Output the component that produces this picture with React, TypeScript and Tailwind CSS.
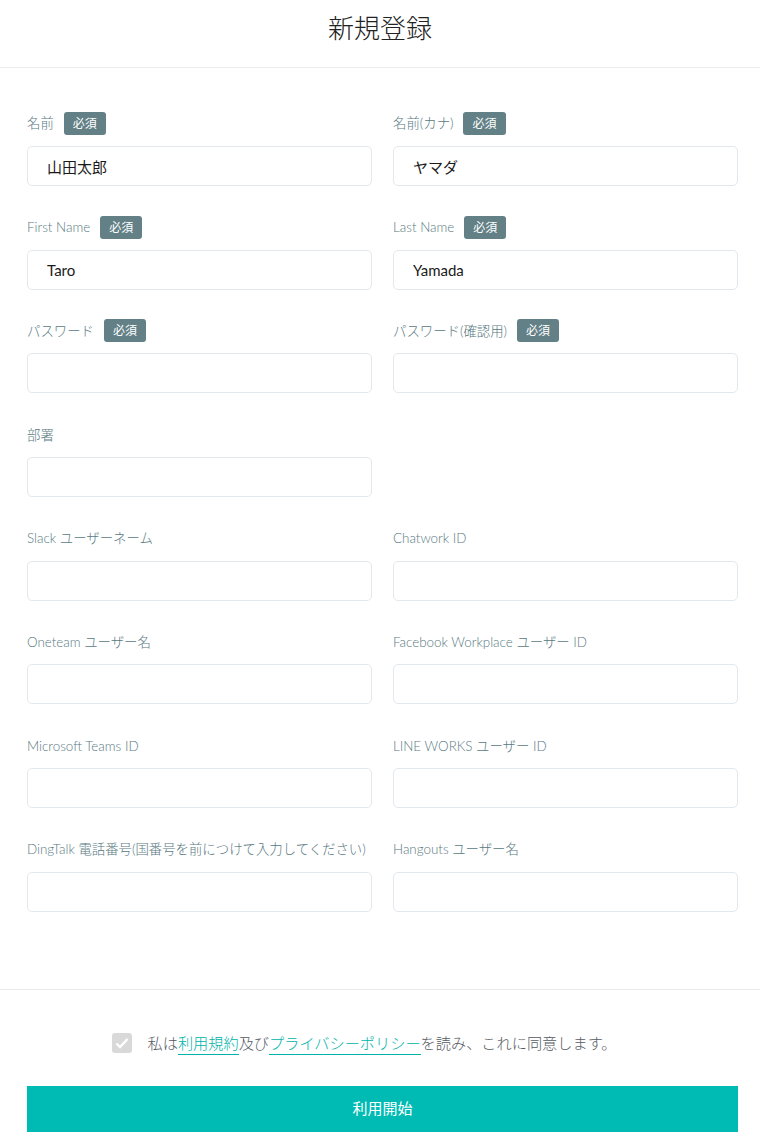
import React from 'react'

const font = { fontFamily: 'Lato, "Noto Sans CJK JP", sans-serif' }

type Field = { label: string, required?: boolean, value?: string, type?: string }

const rows: (Field | null)[][] = [
    [{ label: '名前', required: true, value: '山田太郎' }, { label: '名前(カナ)', required: true, value: 'ヤマダ' }],
    [{ label: 'First Name', required: true, value: 'Taro' }, { label: 'Last Name', required: true, value: 'Yamada' }],
    [{ label: 'パスワード', required: true, type: 'password' }, { label: 'パスワード(確認用)', required: true, type: 'password' }],
    [{ label: '部署' }, null],
    [{ label: 'Slack ユーザーネーム' }, { label: 'Chatwork ID' }],
    [{ label: 'Oneteam ユーザー名' }, { label: 'Facebook Workplace ユーザー ID' }],
    [{ label: 'Microsoft Teams ID' }, { label: 'LINE WORKS ユーザー ID' }],
    [{ label: 'DingTalk 電話番号(国番号を前につけて入力してください)' }, { label: 'Hangouts ユーザー名' }],
]

function FormField({ field }: { field: Field }) {
    return (
        <div className="flex flex-col">
            <div className="flex items-center h-[23px] mb-[11px]">
                <span className="text-[13.4px] font-light text-[#58797f] whitespace-nowrap">{field.label}</span>
                {field.required && (
                    <span className="ml-[10px] h-[23px] px-[9px] rounded-[3px] bg-[#638086] text-white text-[12px] leading-[23px]">
                        必須
                    </span>
                )}
            </div>
            <input
                type={field.type ?? 'text'}
                defaultValue={field.value}
                className="h-[40px] w-full rounded-[5px] border border-[#e3e8ee] bg-white px-[19px] text-[15px] text-[#1a1a1a] outline-none"
                style={font}
            />
        </div>
    )
}

export default function App() {
    return (
        <div className="min-h-[1144px] bg-white" style={font}>
            <header className="h-[68px] border-b border-[#ececec] flex items-center justify-center">
                <h1 className="text-[26px] font-light text-[#222] -mt-[10px]">新規登録</h1>
            </header>

            <form className="pt-[44px] pl-[27px] pr-[22px] flex flex-col gap-[29.7px]">
                {rows.map((row, i) => (
                    <div key={i} className="grid grid-cols-2 gap-x-[21px]">
                        {row.map((f, j) => f ? <FormField key={j} field={f} /> : <div key={j} />)}
                    </div>
                ))}
            </form>

            <div className="mt-[77px] border-t border-[#ececec]" />

            <div className="pt-[42px] flex items-center justify-center pr-[32px]">
                <span className="w-[20px] h-[20px] rounded-[3px] bg-[#d9d9d9] flex items-center justify-center">
                    <svg width="16" height="16" viewBox="0 0 16 16" fill="none">
                        <path d="M2.5 8.5l3.5 3.5 7.5-8" stroke="white" strokeWidth="2.4" />
                    </svg>
                </span>
                <p className="ml-[16px] text-[15.2px] font-light text-[#555a62]">
                    私は<a className="text-[#00b3aa] border-b border-[#00b3aa] pb-[2px]">利用規約</a>及び<a className="text-[#00b3aa] border-b border-[#00b3aa] pb-[2px]">プライバシーポリシー</a>を読み、これに同意します。
                </p>
            </div>

            <div className="pt-[31px] pl-[27px] pr-[22px]">
                <button className="w-full h-[46px] bg-[#00bbb4] text-white text-[15px]">
                    利用開始
                </button>
            </div>
        </div>
    )
}
